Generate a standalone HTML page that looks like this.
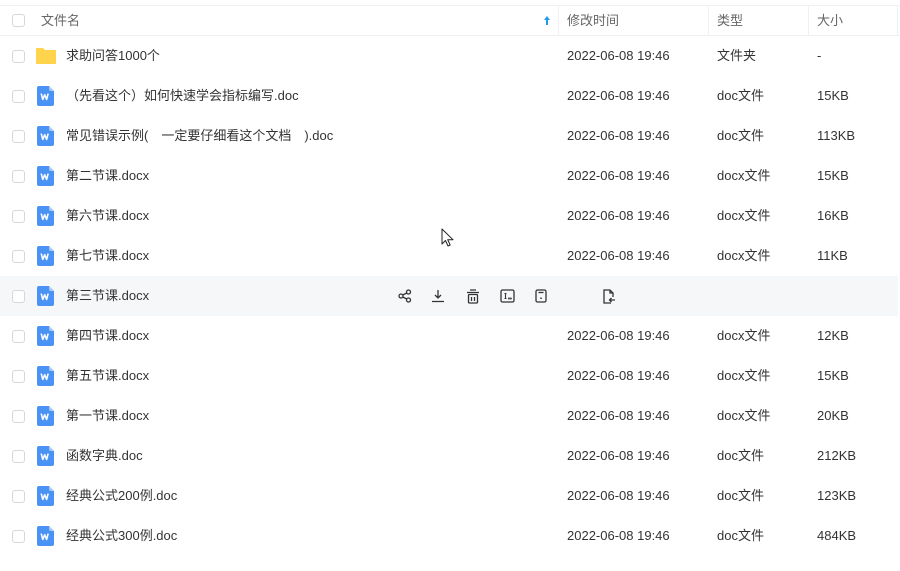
<!DOCTYPE html>
<html><head><meta charset="utf-8"><style>
*{margin:0;padding:0;box-sizing:border-box}
body{width:900px;height:571px;background:#fff;font-family:"Liberation Sans","Noto Sans CJK SC",sans-serif;font-size:13px;color:#333;position:relative;overflow:hidden}
.hdr{position:absolute;left:0;top:5px;width:900px;height:31px;border-top:1px solid #eef0f2;border-bottom:1px solid #eef0f2;color:#666}
.hdr span{position:absolute;top:0;line-height:29px;height:29px}
.vd{position:absolute;top:0;width:1px;height:30px;background:#eef0f2}
.cb{position:absolute;left:12px;width:13px;height:13px;border:1px solid #d4d7dc;border-radius:3px;background:#fff}
.row{position:absolute;left:0;width:898px;height:40px}
.row span{position:absolute;top:0;height:40px;line-height:40px;white-space:pre}
.row .cb{top:14px}
.ic{position:absolute;left:37px;top:10px}
.hov{background:#f6f7f9}
.act{position:absolute;top:13px}
</style></head><body>
<div class="hdr">
<div class="cb" style="top:8px"></div>
<span style="left:41px">文件名</span>
<svg style="position:absolute;left:543px;top:9px" width="8" height="11" viewBox="0 0 8 11"><path d="M4 1L1 5h2v5h2V5h2z" fill="#1e9bf0"/></svg>
<div class="vd" style="left:558px"></div>
<span style="left:567px">修改时间</span>
<div class="vd" style="left:708px"></div>
<span style="left:717px">类型</span>
<div class="vd" style="left:808px"></div>
<span style="left:817px">大小</span>
<div class="vd" style="left:897px"></div>
</div>

<div id="rows"></div>
<script>
var R=[["求助问答1000个","文件夹","-",1],
["（先看这个）如何快速学会指标编写.doc","doc文件","15KB"],
["常见错误示例(　一定要仔细看这个文档　).doc","doc文件","113KB"],
["第二节课.docx","docx文件","15KB"],
["第六节课.docx","docx文件","16KB"],
["第七节课.docx","docx文件","11KB"],
["第三节课.docx","","",0,1],
["第四节课.docx","docx文件","12KB"],
["第五节课.docx","docx文件","15KB"],
["第一节课.docx","docx文件","20KB"],
["函数字典.doc","doc文件","212KB"],
["经典公式200例.doc","doc文件","123KB"],
["经典公式300例.doc","doc文件","484KB"]];
var folder='<svg class="ic" width="20" height="20" viewBox="0 0 20 20" style="left:36px;top:11px"><path d="M0 2a1 1 0 0 1 1-1h6l2 2h10a1 1 0 0 1 1 1v12a1 1 0 0 1-1 1H1a1 1 0 0 1-1-1z" fill="#ffd44c"/></svg>';
var doc='<svg class="ic" width="17" height="20" viewBox="0 0 17 20"><path d="M2 0h10l5 5v13a2 2 0 0 1-2 2H2a2 2 0 0 1-2-2V2a2 2 0 0 1 2-2z" fill="#4a93f5"/><path d="M12 0v3a2 2 0 0 0 2 2h3z" fill="#a9cbfb"/><path d="M4.2 7.5l1.6 6 1.9-4.8 1.9 4.8 1.6-6" fill="none" stroke="#fff" stroke-width="1.5" stroke-linejoin="round"/></svg>';
var acts='<svg class="act" style="left:398px" width="14" height="14" viewBox="0 0 14 14" fill="none" stroke="#333" stroke-width="1.3"><circle cx="3" cy="7" r="2"/><circle cx="10.5" cy="3" r="2"/><circle cx="10.5" cy="11" r="2"/><path d="M4.8 6l4-2M4.8 8l4 2"/></svg>'+
'<svg class="act" style="left:431px" width="14" height="14" viewBox="0 0 14 14" fill="none" stroke="#333" stroke-width="1.3"><path d="M7 1v8M4 6l3 3 3-3M1 12.5h12"/></svg>'+
'<svg class="act" style="left:466px" width="14" height="15" viewBox="0 0 14 15" fill="none" stroke="#333" stroke-width="1.3"><path d="M4 1h6M1 3.5h12"/><rect x="2.5" y="5.5" width="9" height="8.5" rx="1"/><path d="M5.5 8v4M8.5 8v4"/></svg>'+
'<svg class="act" style="left:500px" width="15" height="14" viewBox="0 0 15 14" fill="none" stroke="#333" stroke-width="1.3"><rect x="1" y="1" width="13" height="12" rx="1.5"/><path d="M4.5 4.5h2M5.5 4.5v5M4.5 9.5h2" stroke-width="1.1"/><circle cx="9" cy="9.5" r=".4"/><circle cx="10.8" cy="9.5" r=".4"/></svg>'+
'<svg class="act" style="left:535px" width="12" height="14" viewBox="0 0 12 14" fill="none" stroke="#333" stroke-width="1.3"><rect x="1" y="1" width="10" height="12" rx="1.5"/><path d="M3.5 3.5h5"/><rect x="5.3" y="8.5" width="1.5" height="1.5" fill="#333" stroke="none"/></svg>'+
'<svg class="act" style="left:602px" width="14" height="15" viewBox="0 0 14 15" fill="none" stroke="#333" stroke-width="1.3"><path d="M9 14H2V1h6l3 3v4"/><path d="M8 1v3h3"/><path d="M13 11H7.5M9.5 9L7.5 11l2 2"/></svg>';
var h='';
R.forEach(function(r,i){
var y=36+i*40;
h+='<div class="row'+(r[4]?' hov':'')+'" style="top:'+y+'px"><div class="cb"></div>'+(r[3]?folder:doc)+'<span style="left:66px">'+r[0]+'</span>';
if(r[4]){h+=acts;}else{h+='<span style="left:567px">2022-06-08 19:46</span><span style="left:717px">'+r[1]+'</span><span style="left:817px">'+r[2]+'</span>';}
h+='</div>';
});
document.getElementById('rows').innerHTML=h;
</script>
<svg style="position:absolute;left:441px;top:228px" width="14" height="20" viewBox="0 0 14 20"><path d="M1 1v15l3.5-3.5 2.5 5.5 2.2-1-2.5-5.3H12z" fill="#fff" stroke="#222" stroke-width="1" stroke-linejoin="round"/></svg>
</body></html>
